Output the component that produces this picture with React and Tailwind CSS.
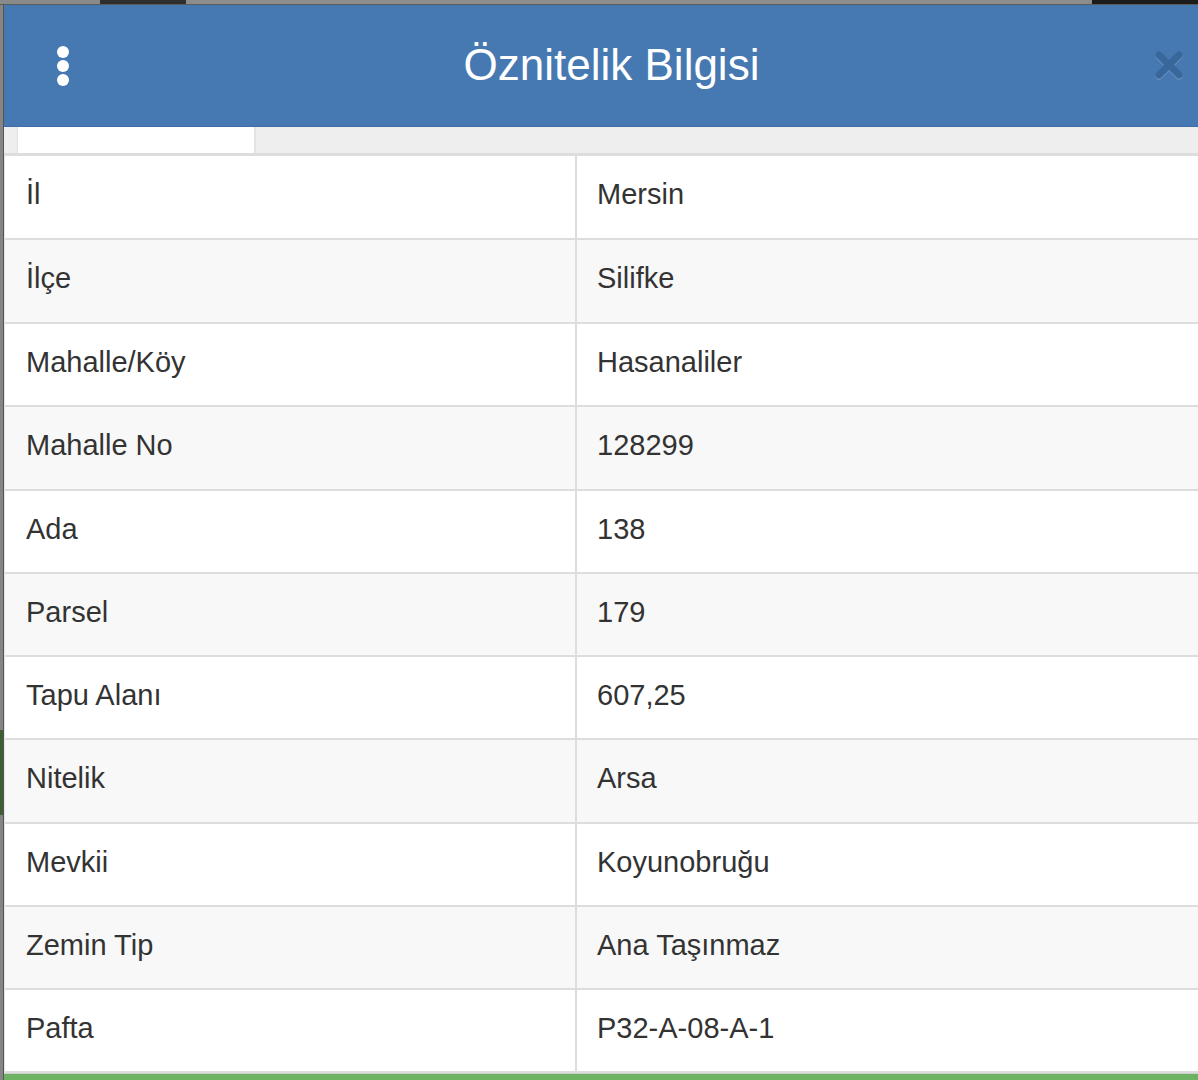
const rows = [
  ["İl", "Mersin", "h-[84px]"],
  ["İlçe", "Silifke", "h-[84px]"],
  ["Mahalle/Köy", "Hasanaliler", "h-[83px]"],
  ["Mahalle No", "128299", "h-[84px]"],
  ["Ada", "138", "h-[83px]"],
  ["Parsel", "179", "h-[83px]"],
  ["Tapu Alanı", "607,25", "h-[83px]"],
  ["Nitelik", "Arsa", "h-[84px]"],
  ["Mevkii", "Koyunobruğu", "h-[83px]"],
  ["Zemin Tip", "Ana Taşınmaz", "h-[83px]"],
  ["Pafta", "P32-A-08-A-1", "h-[83px]"],
]

function Dots() {
  return (
    <div className="flex flex-col gap-[2px] pl-[53px] w-[69px]">
      <span className="block w-[12px] h-[12px] rounded-full bg-white" />
      <span className="block w-[12px] h-[12px] rounded-full bg-white" />
      <span className="block w-[12px] h-[12px] rounded-full bg-white" />
    </div>
  )
}

function CloseIcon() {
  return (
    <div className="pr-[14px] pl-[4px] pb-[2px]">
      <svg width="30" height="30" viewBox="0 0 30 30">
        <g stroke="#9fb8d6" strokeWidth="7" strokeLinecap="round" opacity="0.5">
          <line x1="5" y1="6" x2="25" y2="26" />
          <line x1="25" y1="6" x2="5" y2="26" />
        </g>
        <g stroke="#37679b" strokeWidth="7" strokeLinecap="round">
          <line x1="5" y1="5" x2="25" y2="25" />
          <line x1="25" y1="5" x2="5" y2="25" />
        </g>
      </svg>
    </div>
  )
}

export default function App() {
  return (
    <div
      className="w-[1198px] h-[1080px] overflow-hidden bg-[#7e7e7e] flex flex-col"
      style={{ fontFamily: '"Liberation Sans", Arial, sans-serif' }}
    >
      {/* map strip behind the dialog */}
      <div className="h-[5px] flex shrink-0 border-b border-[#5a5a5a]">
        <div className="w-[100px] bg-[#8a8a8a]" />
        <div className="w-[86px] bg-[#2e2e2e]" />
        <div className="flex-1 bg-[#8d8d8d]" />
        <div className="w-[106px] bg-[#1c1c1c]" />
      </div>

      <div className="flex flex-1 min-h-0">
        {/* left edge of map */}
        <div className="w-[4px] flex flex-col border-r border-[#555]">
          <div className="h-[725px] bg-[#858585]" />
          <div className="h-[85px] bg-[#3d5e30]" />
          <div className="flex-1 bg-[#858585]" />
        </div>

        {/* dialog */}
        <div className="flex-1 flex flex-col bg-white">
          <div className="h-[122px] shrink-0 bg-[#4679b2] border-b border-[#3e6ea6] flex items-center">
            <Dots />
            <div className="flex-1 text-center text-white text-[44px] leading-none pb-[2px]">
              Öznitelik Bilgisi
            </div>
            <CloseIcon />
          </div>

          {/* tab strip */}
          <div className="h-[29px] shrink-0 bg-[#eeeeef] border-b-[3px] border-[#dddddd] flex pl-[13px]">
            <div className="w-[239px] h-[26px] bg-white border-l border-r-2 border-[#e2e2e2]" />
          </div>

          {/* attribute table */}
          <div className="flex flex-col border-l border-[#e4e4e4]">
            {rows.map(([k, v, h], i) => (
              <div
                key={k}
                className={
                  h +
                  " flex border-b-2 border-[#dddddd] text-[29px] text-[#333333] " +
                  (i % 2 === 0 ? "bg-white" : "bg-[#f8f8f8]")
                }
              >
                <div className="w-[572px] flex items-center pl-[21px] border-r-2 border-[#dddddd] pb-[4px]">
                  {k}
                </div>
                <div className="flex-1 flex items-center pl-[20px] pb-[4px]">{v}</div>
              </div>
            ))}
          </div>

          <div className="flex-1 border-t border-[#cfcfcf] bg-[#6db262]" />
        </div>
      </div>
    </div>
  )
}
